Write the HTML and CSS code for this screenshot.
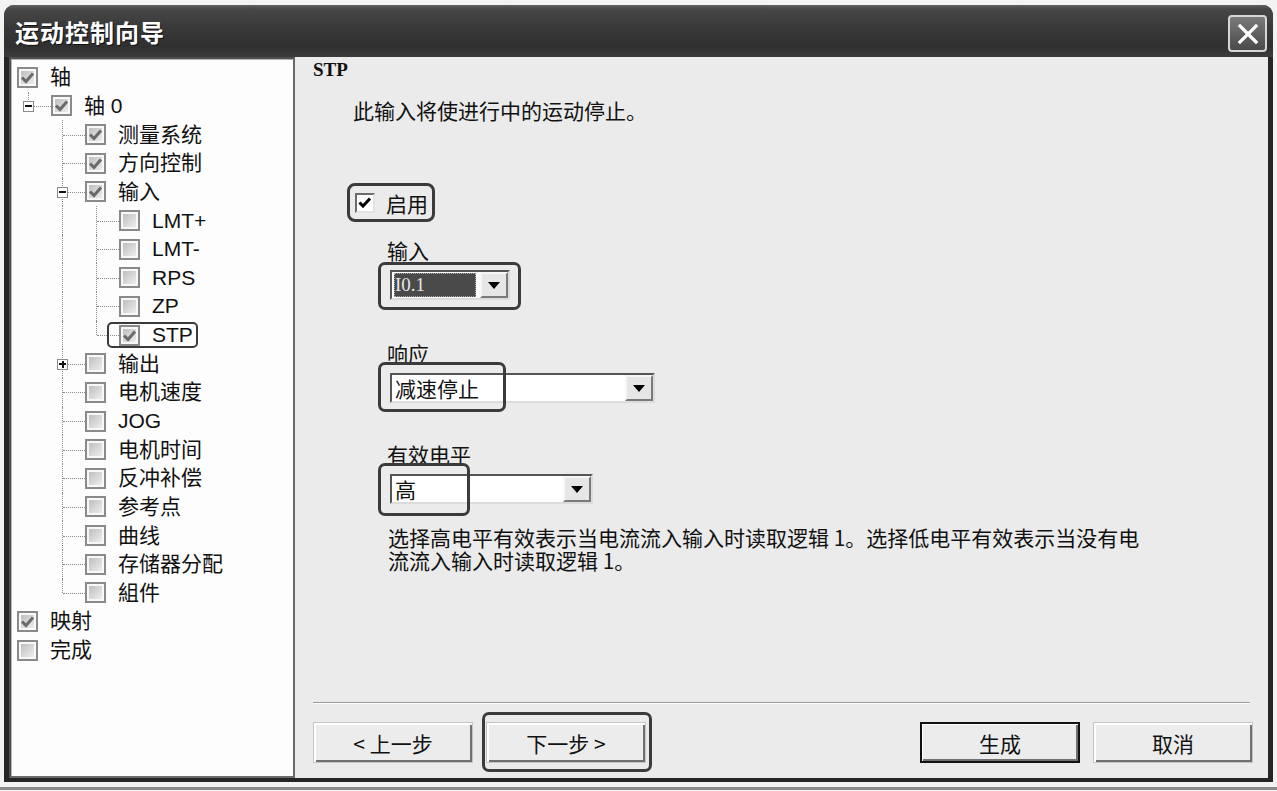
FILE: index.html
```html
<!DOCTYPE html>
<html lang="zh-CN">
<head>
<meta charset="utf-8">
<title>运动控制向导</title>
<link rel="stylesheet" href="styles.css">
</head>
<body>
<div class="window">
  <div class="titlebar">
    <span class="title">运动控制向导</span>
    <span class="close"><svg width="24" height="24" viewBox="0 0 24 24"><path d="M4 4 L20 20 M20 4 L4 20" stroke="#fff" stroke-width="3.2" stroke-linecap="square" fill="none"/></svg></span>
  </div>
  <div class="body">
    <div class="tree">
      <div class="row">
        <span class="cbcell"><span class="cb"><svg class="ck" width="17" height="17" viewBox="0 0 17 17"><path d="M3 8.5 L7 12.5 L14 4.5" stroke="#6a6a6a" stroke-width="3" fill="none"/></svg></span></span>
        <span class="lbl">轴</span>
      </div>
      <div class="row">
        <span class="g l"><span class="exp minus"></span></span>
        <span class="cbcell"><span class="cb"><svg class="ck" width="17" height="17" viewBox="0 0 17 17"><path d="M3 8.5 L7 12.5 L14 4.5" stroke="#6a6a6a" stroke-width="3" fill="none"/></svg></span></span>
        <span class="lbl">轴 0</span>
      </div>
      <div class="row">
        <span class="g"></span><span class="g t"></span>
        <span class="cbcell"><span class="cb"><svg class="ck" width="17" height="17" viewBox="0 0 17 17"><path d="M3 8.5 L7 12.5 L14 4.5" stroke="#6a6a6a" stroke-width="3" fill="none"/></svg></span></span>
        <span class="lbl">测量系统</span>
      </div>
      <div class="row">
        <span class="g"></span><span class="g t"></span>
        <span class="cbcell"><span class="cb"><svg class="ck" width="17" height="17" viewBox="0 0 17 17"><path d="M3 8.5 L7 12.5 L14 4.5" stroke="#6a6a6a" stroke-width="3" fill="none"/></svg></span></span>
        <span class="lbl">方向控制</span>
      </div>
      <div class="row">
        <span class="g"></span><span class="g t"><span class="exp minus"></span></span>
        <span class="cbcell"><span class="cb"><svg class="ck" width="17" height="17" viewBox="0 0 17 17"><path d="M3 8.5 L7 12.5 L14 4.5" stroke="#6a6a6a" stroke-width="3" fill="none"/></svg></span></span>
        <span class="lbl">输入</span>
      </div>
      <div class="row">
        <span class="g"></span><span class="g v"></span><span class="g t"></span>
        <span class="cbcell"><span class="cb"></span></span>
        <span class="lbl">LMT+</span>
      </div>
      <div class="row">
        <span class="g"></span><span class="g v"></span><span class="g t"></span>
        <span class="cbcell"><span class="cb"></span></span>
        <span class="lbl">LMT-</span>
      </div>
      <div class="row">
        <span class="g"></span><span class="g v"></span><span class="g t"></span>
        <span class="cbcell"><span class="cb"></span></span>
        <span class="lbl">RPS</span>
      </div>
      <div class="row">
        <span class="g"></span><span class="g v"></span><span class="g t"></span>
        <span class="cbcell"><span class="cb"></span></span>
        <span class="lbl">ZP</span>
      </div>
      <div class="row">
        <span class="g"></span><span class="g v"></span><span class="g l"></span>
        <span class="cbcell"><span class="mark mark-stp"></span><span class="cb"><svg class="ck" width="17" height="17" viewBox="0 0 17 17"><path d="M3 8.5 L7 12.5 L14 4.5" stroke="#6a6a6a" stroke-width="3" fill="none"/></svg></span></span>
        <span class="lbl">STP</span>
      </div>
      <div class="row">
        <span class="g"></span><span class="g t"><span class="exp plus"></span></span>
        <span class="cbcell"><span class="cb"></span></span>
        <span class="lbl">输出</span>
      </div>
      <div class="row">
        <span class="g"></span><span class="g t"></span>
        <span class="cbcell"><span class="cb"></span></span>
        <span class="lbl">电机速度</span>
      </div>
      <div class="row">
        <span class="g"></span><span class="g t"></span>
        <span class="cbcell"><span class="cb"></span></span>
        <span class="lbl">JOG</span>
      </div>
      <div class="row">
        <span class="g"></span><span class="g t"></span>
        <span class="cbcell"><span class="cb"></span></span>
        <span class="lbl">电机时间</span>
      </div>
      <div class="row">
        <span class="g"></span><span class="g t"></span>
        <span class="cbcell"><span class="cb"></span></span>
        <span class="lbl">反冲补偿</span>
      </div>
      <div class="row">
        <span class="g"></span><span class="g t"></span>
        <span class="cbcell"><span class="cb"></span></span>
        <span class="lbl">参考点</span>
      </div>
      <div class="row">
        <span class="g"></span><span class="g t"></span>
        <span class="cbcell"><span class="cb"></span></span>
        <span class="lbl">曲线</span>
      </div>
      <div class="row">
        <span class="g"></span><span class="g t"></span>
        <span class="cbcell"><span class="cb"></span></span>
        <span class="lbl">存储器分配</span>
      </div>
      <div class="row">
        <span class="g"></span><span class="g l"></span>
        <span class="cbcell"><span class="cb"></span></span>
        <span class="lbl">組件</span>
      </div>
      <div class="row">
        <span class="cbcell"><span class="cb"><svg class="ck" width="17" height="17" viewBox="0 0 17 17"><path d="M3 8.5 L7 12.5 L14 4.5" stroke="#6a6a6a" stroke-width="3" fill="none"/></svg></span></span>
        <span class="lbl">映射</span>
      </div>
      <div class="row">
        <span class="cbcell"><span class="cb"></span></span>
        <span class="lbl">完成</span>
      </div>
    </div>

    <div class="pane">
      <div class="heading">STP</div>
      <p class="intro">此输入将使进行中的运动停止。</p>
      <div class="enable">
        <span class="chk"><svg width="16" height="16" viewBox="0 0 16 16"><path d="M2.5 7.5 L6 11 L13 3.5" stroke="#000" stroke-width="3" fill="none"/></svg></span>
        <span class="enable-text">启用</span>
      </div>

      <div class="field-label">输入</div>
      <div class="combo combo-1">
        <span class="value selected">I0.1</span>
        <span class="arrow"><svg width="12" height="7" viewBox="0 0 12 7"><path d="M0 0 H12 L6 7 Z" fill="#000"/></svg></span>
        <span class="mark mark-1"></span>
      </div>

      <div class="field-label gap">响应</div>
      <div class="combo combo-2">
        <span class="value">减速停止</span>
        <span class="arrow"><svg width="12" height="7" viewBox="0 0 12 7"><path d="M0 0 H12 L6 7 Z" fill="#000"/></svg></span>
        <span class="mark mark-2"></span>
      </div>

      <div class="field-label gap2">有效电平</div>
      <div class="combo combo-3">
        <span class="value">高</span>
        <span class="arrow"><svg width="12" height="7" viewBox="0 0 12 7"><path d="M0 0 H12 L6 7 Z" fill="#000"/></svg></span>
        <span class="mark mark-3"></span>
      </div>

      <div class="desc">
        <div class="desc-line">选择高电平有效表示当电流流入输入时读取逻辑 1。选择低电平有效表示当没有电</div>
        <div class="desc-line">流流入输入时读取逻辑 1。</div>
      </div>

      <div class="footer">
        <div class="sep"></div>
        <div class="buttons">
          <div class="btn-group">
            <button class="btn" type="button">&lt; 上一步</button>
            <button class="btn next" type="button">下一步 &gt;<span class="mark mark-next"></span></button>
          </div>
          <div class="btn-group">
            <button class="btn default" type="button">生成</button>
            <button class="btn" type="button">取消</button>
          </div>
        </div>
      </div>
    </div>
  </div>
</div>
<div class="baseline"></div>
</body>
</html>
```

FILE: styles.css
```css
* { box-sizing: border-box; }
html, body { margin: 0; padding: 0; }
body {
  width: 1277px;
  height: 791px;
  overflow: hidden;
  background: #f3f3f3;
  font-family: "Noto Sans CJK SC", sans-serif;
  color: #111;
}

.window {
  margin: 5px 0 0 4px;
  width: 1269px;
  height: 777px;
  background: #262626;
  border-radius: 10px 10px 0 0;
  display: flex;
  flex-direction: column;
  overflow: hidden;
}

.titlebar {
  height: 52px;
  flex: none;
  display: flex;
  align-items: center;
  justify-content: space-between;
  padding: 0 6px 0 11px;
  background: linear-gradient(#626262 0, #474747 4px, #3a3a3a 40%, #303030 80%, #3c3c3c 100%);
}

.title {
  color: #fff;
  font-size: 24px;
  font-weight: 700;
  letter-spacing: 1px;
  line-height: 30px;
  margin-top: 2px;
  text-shadow: 1px 1px 0 #111;
}

.close {
  width: 39px;
  height: 37px;
  margin-top: 5px;
  border: 2px solid #d6d6d6;
  border-radius: 4px;
  background: linear-gradient(#7a7a7a, #4a4a4a);
  display: flex;
  align-items: center;
  justify-content: center;
}

.body {
  flex: 1;
  display: flex;
  padding: 0 5px 4px 5px;
  min-height: 0;
}

/* ---------- tree ---------- */
.tree {
  width: 286px;
  flex: none;
  background: #fdfdfd;
  border: 2px solid;
  border-color: #4f4f4f #6a6a6a #6a6a6a #4f4f4f;
  box-shadow: inset 1px 1px 0 #b5b5b5;
  padding-top: 4px;
  font-family: "Liberation Sans", "Noto Sans CJK SC", sans-serif;
  font-size: 21px;
}

.row {
  display: flex;
  align-items: center;
  height: 28.65px;
}

.g {
  position: relative;
  width: 34px;
  height: 100%;
  flex: none;
}
.g.v::before,
.g.t::before,
.g.l::before {
  content: "";
  position: absolute;
  left: 17px;
  top: 0;
  bottom: 0;
  border-left: 1px dotted #8a8a8a;
}
.g.l::before { bottom: 50%; }
.g.t::after,
.g.l::after {
  content: "";
  position: absolute;
  left: 18px;
  top: 50%;
  width: 22px;
  border-top: 1px dotted #8a8a8a;
}

.exp {
  position: absolute;
  left: 12px;
  top: calc(50% - 5px);
  width: 11px;
  height: 11px;
  border: 1px solid #8a8a8a;
  background: #fff;
  z-index: 1;
}
.exp::before {
  content: "";
  position: absolute;
  left: 1px;
  top: 3.5px;
  width: 7px;
  height: 2px;
  background: #111;
}
.exp.plus::after {
  content: "";
  position: absolute;
  left: 3.5px;
  top: 1px;
  width: 2px;
  height: 7px;
  background: #111;
}

.cbcell {
  position: relative;
  width: 34px;
  height: 100%;
  flex: none;
  display: flex;
  align-items: center;
  justify-content: center;
}

.cb {
  position: relative;
  width: 21px;
  height: 21px;
  border: 2px solid #8a8a8a;
  background: linear-gradient(135deg, #b8b8b8, #f4f4f4);
  box-shadow: inset 0 0 0 2px #f8f8f8;
  margin-left: -1px;
}
.ck {
  position: absolute;
  left: 0;
  top: 0;
}

.lbl {
  margin-left: 5px;
  line-height: 26px;
  white-space: nowrap;
  color: #111;
}

.mark {
  position: absolute;
  border: 3px solid #3b3b3b;
  border-radius: 7px;
  pointer-events: none;
}
.mark-stp {
  left: -6px;
  top: calc(50% - 13px);
  width: 91px;
  height: 26px;
  border-width: 2.5px;
  border-radius: 5px;
}

/* ---------- right pane ---------- */
.pane {
  flex: 1;
  background: #ebebeb;
  display: flex;
  flex-direction: column;
  align-items: flex-start;
  padding: 0 15px 15px 18px;
  font-size: 21px;
}

.heading {
  margin-top: 2px;
  font-family: "Liberation Serif", serif;
  font-weight: 700;
  font-size: 19px;
  line-height: 22px;
}

.intro {
  margin: 16px 0 0 40px;
  line-height: 26px;
}

.enable {
  margin: 60px 0 0 34px;
  height: 39px;
  display: flex;
  align-items: center;
  gap: 11px;
  padding: 0 4px 0 5px;
  border: 3px solid #3b3b3b;
  border-radius: 8px;
}
.chk {
  width: 20px;
  height: 20px;
  background: #fff;
  border: 2px solid;
  border-color: #6c6c6c #e2e2e2 #e2e2e2 #6c6c6c;
  display: flex;
  align-items: center;
  justify-content: center;
}
.enable-text { line-height: 26px; }

.field-label {
  margin: 16px 0 0 74px;
  line-height: 24px;
}
.field-label.gap { margin-top: 41px; }
.field-label.gap2 { margin-top: 39px; }

.combo {
  position: relative;
  margin: 8px 0 0 77px;
  height: 30px;
  display: flex;
  align-items: stretch;
  background: #fff;
  border: 2px solid;
  border-color: #555 #dcdcdc #dcdcdc #555;
}
.combo-1 { width: 120px; }
.combo-2 { width: 265px; }
.combo-3 { width: 203px; }

.value {
  flex: 1;
  padding-left: 3px;
  line-height: 26px;
  white-space: nowrap;
}
.value.selected {
  margin: 1px 4px 1px 2px;
  padding-left: 1px;
  background: #4a4a4a;
  color: #e6e6e6;
  outline: 1px dotted #aaa;
  outline-offset: -1px;
  font-family: "Liberation Serif", serif;
  font-size: 19px;
  line-height: 24px;
}

.arrow {
  width: 28px;
  flex: none;
  background: #e6e6e6;
  border: 2px solid;
  border-color: #f6f6f6 #7a7a7a #7a7a7a #f6f6f6;
  display: flex;
  align-items: center;
  justify-content: center;
}

.mark-1 { left: -14px; top: -10px; width: 143px; height: 48px; }
.mark-2 { left: -14px; top: -13px; width: 128px; height: 50px; }
.mark-3 { left: -14px; top: -13px; width: 92px; height: 53px; }

.desc {
  margin: 22px 0 0 75px;
  font-size: 21px;
}
.desc-line {
  height: 23px;
  line-height: 23px;
  white-space: nowrap;
}

.footer {
  margin-top: auto;
  align-self: stretch;
}
.sep {
  height: 2px;
  margin-right: 3px;
  border-top: 1px solid #9a9a9a;
  border-bottom: 1px solid #fff;
}
.buttons {
  margin-top: 18px;
  display: flex;
  justify-content: space-between;
}
.btn-group {
  display: flex;
  gap: 13px;
}
.btn {
  position: relative;
  width: 160px;
  height: 41px;
  padding: 0;
  font-family: "Noto Sans CJK SC", sans-serif;
  font-size: 21px;
  color: #111;
  background: #ececec;
  border: 1px solid #c4c4c4;
  box-shadow: inset 2px 2px 0 #fff, inset -2px -2px 0 #707070;
}
.btn.default {
  border: 2px solid #111;
  box-shadow: inset 1px 1px 0 #fff, inset -2px -2px 0 #707070;
}
.mark-next { left: -5px; top: -11px; width: 170px; height: 60px; }

.baseline {
  margin-top: 5px;
  height: 3px;
  background: #8a8a8a;
}
```
